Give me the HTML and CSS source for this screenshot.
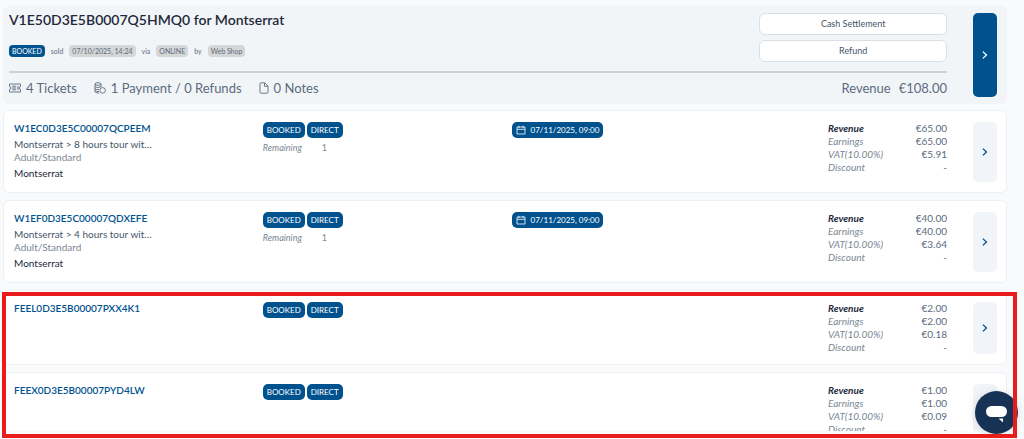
FILE: index.html
```html
<!DOCTYPE html>
<html lang="en">
<head>
  <meta charset="UTF-8" />
  <title>Booking for Montserrat</title>
  <meta name="viewport" content="width=device-width, initial-scale=1.0" />
  <link rel="stylesheet" href="styles.css">
</head>
<body>
  <svg class="sprite" aria-hidden="true">
    <symbol id="chevron" viewBox="0 0 10 10">
      <path d="M3.2 2.2 L6.2 5 L3.2 7.8" fill="none" stroke="currentColor" stroke-width="1.1" />
    </symbol>
    <symbol id="calendar" viewBox="0 0 10 10">
      <path d="M1 2h8v7H1zM1 4.3h8M3 .8v2.2M7 .8v2.2" fill="none" stroke="currentColor" stroke-width=".8" stroke-linejoin="round" />
    </symbol>
  </svg>

  <main class="page">
    <header class="summary">
      <div class="summary-body">
        <div class="summary-top">
          <div>
            <h1>V1E50D3E5B0007Q5HMQ0 for Montserrat</h1>
            <div class="meta">
              <span class="tag tag-blue">BOOKED</span>
              <span>sold</span>
              <span class="tag">07/10/2025, 14:24</span>
              <span>via</span>
              <span class="tag">ONLINE</span>
              <span>by</span>
              <span class="tag">Web Shop</span>
            </div>
          </div>
          <div class="actions">
            <button type="button" class="action">Cash Settlement</button>
            <button type="button" class="action">Refund</button>
          </div>
        </div>
        <div class="totals">
          <span class="total tickets">
            <svg width="12" height="12" viewBox="0 0 12 12" fill="none" stroke="currentColor" stroke-width=".9">
              <path d="M.5 2h11v2.6a1 1 0 0 0 0 2.8V10H.5V7.4a1 1 0 0 0 0-2.8z" />
              <path d="M3 4.2h4.2M3 6h4.2M3 7.8h4.2M9 4v4" />
            </svg>
            4 Tickets
          </span>
          <span class="total payments">
            <svg width="12" height="12" viewBox="0 0 12 12" fill="none" stroke="currentColor" stroke-width=".9">
              <ellipse cx="4" cy="2" rx="3" ry="1.3" />
              <path d="M1 2v7.6c0 .8 1.3 1.3 3 1.3h1M7 2v3M1 4.2c0 .8 1.3 1.2 3 1.2s3-.4 3-1.2M1 6.3c0 .8 1.3 1.2 3 1.2h1M1 8.3c0 .8 1.3 1.2 3 1.2h1" />
              <circle cx="8.6" cy="8.4" r="2.8" />
            </svg>
            1 Payment / 0 Refunds
          </span>
          <span class="total notes">
            <svg width="10" height="12" viewBox="0 0 10 12" fill="none" stroke="currentColor" stroke-width=".9" stroke-linejoin="round">
              <path d="M2 .8h3.7L9 4.1v6.1a1 1 0 0 1-1 1H2a1 1 0 0 1-1-1V1.8a1 1 0 0 1 1-1z" />
              <path d="M5.5 1v3.3H9" />
            </svg>
            0 Notes
          </span>
          <span class="revenue">Revenue <span>€108.00</span></span>
        </div>
      </div>
      <button type="button" class="open open-main" aria-label="Open booking"><svg width="12" height="12"><use href="#chevron" /></svg></button>
    </header>

    <article class="card">
      <div class="columns">
        <div class="product">
          <a href="#" class="code">W1EC0D3E5C00007QCPEEM</a>
          <span class="tour">Montserrat &gt; 8 hours tour wit…</span>
          <span class="fare">Adult/Standard</span>
          <span class="place">Montserrat</span>
        </div>
        <div class="status">
          <div class="badges"><span class="badge">BOOKED</span><span class="badge">DIRECT</span></div>
          <div class="remaining"><i>Remaining</i><span>1</span></div>
        </div>
        <div><span class="badge date"><svg width="10" height="10"><use href="#calendar" /></svg>07/11/2025, 09:00</span></div>
        <dl class="money">
          <dt class="strong">Revenue</dt><dd>€65.00</dd>
          <dt>Earnings</dt><dd>€65.00</dd>
          <dt>VAT(10.00%)</dt><dd>€5.91</dd>
          <dt>Discount</dt><dd>-</dd>
        </dl>
      </div>
      <button type="button" class="open" aria-label="Open ticket"><svg width="12" height="12"><use href="#chevron" /></svg></button>
    </article>

    <article class="card">
      <div class="columns">
        <div class="product">
          <a href="#" class="code">W1EF0D3E5C00007QDXEFE</a>
          <span class="tour">Montserrat &gt; 4 hours tour wit…</span>
          <span class="fare">Adult/Standard</span>
          <span class="place">Montserrat</span>
        </div>
        <div class="status">
          <div class="badges"><span class="badge">BOOKED</span><span class="badge">DIRECT</span></div>
          <div class="remaining"><i>Remaining</i><span>1</span></div>
        </div>
        <div><span class="badge date"><svg width="10" height="10"><use href="#calendar" /></svg>07/11/2025, 09:00</span></div>
        <dl class="money">
          <dt class="strong">Revenue</dt><dd>€40.00</dd>
          <dt>Earnings</dt><dd>€40.00</dd>
          <dt>VAT(10.00%)</dt><dd>€3.64</dd>
          <dt>Discount</dt><dd>-</dd>
        </dl>
      </div>
      <button type="button" class="open" aria-label="Open ticket"><svg width="12" height="12"><use href="#chevron" /></svg></button>
    </article>

    <article class="card">
      <div class="columns">
        <div class="product"><a href="#" class="code">FEEL0D3E5B00007PXX4K1</a></div>
        <div class="status">
          <div class="badges"><span class="badge">BOOKED</span><span class="badge">DIRECT</span></div>
        </div>
        <div></div>
        <dl class="money">
          <dt class="strong">Revenue</dt><dd>€2.00</dd>
          <dt>Earnings</dt><dd>€2.00</dd>
          <dt>VAT(10.00%)</dt><dd>€0.18</dd>
          <dt>Discount</dt><dd>-</dd>
        </dl>
      </div>
      <button type="button" class="open" aria-label="Open fee"><svg width="12" height="12"><use href="#chevron" /></svg></button>
    </article>

    <article class="card">
      <div class="columns">
        <div class="product"><a href="#" class="code">FEEX0D3E5B00007PYD4LW</a></div>
        <div class="status">
          <div class="badges"><span class="badge">BOOKED</span><span class="badge">DIRECT</span></div>
        </div>
        <div></div>
        <dl class="money">
          <dt class="strong">Revenue</dt><dd>€1.00</dd>
          <dt>Earnings</dt><dd>€1.00</dd>
          <dt>VAT(10.00%)</dt><dd>€0.09</dd>
          <dt>Discount</dt><dd>-</dd>
        </dl>
      </div>
      <button type="button" class="open" aria-label="Open fee"></button>
    </article>
  </main>

  <button type="button" class="chat" aria-label="Chat">
    <svg width="43" height="43" viewBox="0 0 43 43" fill="#fff">
      <rect x="11" y="15" width="21" height="11" rx="5.5" />
      <path d="M23.5 27.5h4.5v4z" />
    </svg>
  </button>
  <div class="highlight"></div>
</body>
</html>
```
FILE: styles.css
```css
* {
  box-sizing: border-box;
}

body {
  margin: 0;
  height: 100vh;
  overflow: hidden;
  position: relative;
  background-color: #f9fafc;
  color: #5b6b80;
  font-family: Lato, sans-serif;
  font-size: 10px;
  line-height: 13px;
}

button {
  font-family: inherit;
  cursor: pointer;
}

.sprite {
  display: none;
}

.page {
  height: calc(100vh - 8px);
  overflow: hidden;
  padding: 6px 17px 0 3px;
}

.summary {
  display: flex;
  gap: 26px;
  padding: 7px 10px 7px 6px;
  margin-bottom: 6px;
  border-radius: 6px;
  background-color: #f2f5f8;
}

.summary-body {
  flex: 1;
  padding-bottom: 1px;
}

.summary-top {
  display: flex;
  justify-content: space-between;
  padding-bottom: 9px;
  border-bottom: 2px solid #cbd2da;
}

h1 {
  margin: 0 0 19px;
  color: #1e293b;
  font-size: 14px;
  line-height: 13px;
  font-weight: 600;
}

.meta {
  display: flex;
  align-items: center;
  gap: 6px;
  font-size: 7px;
  line-height: 12px;
}

.tag {
  padding: 0 3px;
  border-radius: 4px;
  background-color: #d5d6d6;
}

.tag-blue {
  background-color: #00528f;
  color: #fff;
}

.actions {
  display: flex;
  flex-direction: column;
  gap: 5px;
  width: 20%;
}

.action {
  height: 22px;
  padding: 0 6px 2px;
  border: 1px solid #d9dfe6;
  border-radius: 6px;
  background-color: #fff;
  color: #475569;
  font-size: 9px;
}

.totals {
  display: flex;
  align-items: center;
  gap: 17px;
  padding-top: 7px;
  font-size: 13px;
  line-height: 16px;
}

.total {
  display: flex;
  align-items: center;
  gap: 5px;
}

.revenue {
  display: flex;
  gap: 8px;
  margin-left: auto;
}

.open {
  display: flex;
  align-items: center;
  justify-content: center;
  width: 24px;
  padding: 0;
  border: none;
  border-radius: 5px;
  background-color: #f1f5f9;
  color: #00528f;
}

.open-main {
  background-color: #00528f;
  color: #fff;
}

.card {
  display: flex;
  gap: 26px;
  padding: 11px 9px 10px 10px;
  margin-bottom: 7px;
  border: 1px solid #edf0f3;
  border-radius: 6px;
  background-color: #fff;
}

.columns {
  flex: 1;
  display: grid;
  grid-template-columns: 4fr 4fr 4fr 3fr;
}

.product {
  display: flex;
  flex-direction: column;
  align-items: flex-start;
}

.code {
  color: #00528f;
  font-weight: 600;
  text-decoration: none;
}

.tour {
  margin-top: 3px;
  color: #475569;
}

.fare {
  color: #7b8794;
}

.place {
  margin: 3px 0 2px;
  color: #1e293b;
}

.badges {
  display: flex;
  gap: 2px;
}

.badge {
  padding: 0 4px;
  border-radius: 5px;
  background-color: #00528f;
  color: #fff;
  font-size: 8px;
  line-height: 16px;
}

.date {
  display: inline-flex;
  align-items: center;
  gap: 5px;
}

.remaining {
  display: flex;
  gap: 20px;
  margin-top: 3px;
  font-size: 9px;
  color: #7b8794;
}

.money {
  display: grid;
  grid-template-columns: 1fr auto;
  align-content: start;
  width: 119px;
  margin: 0 0 0 auto;
}

.money dt {
  font-style: italic;
  color: #7b8794;
}

.money .strong {
  color: #1e293b;
  font-weight: 700;
}

.money dd {
  margin: 0;
  text-align: right;
}

.chat {
  position: absolute;
  right: 6px;
  bottom: 5px;
  width: 43px;
  height: 43px;
  padding: 0;
  border: none;
  border-radius: 50%;
  background-color: #163356;
  box-shadow: 0 1px 10px rgba(0, 0, 0, 0.12);
}

.highlight {
  position: absolute;
  inset: auto 7px 1px 2px;
  height: 146px;
  border: 4px solid #ea1b1b;
  pointer-events: none;
}
```
